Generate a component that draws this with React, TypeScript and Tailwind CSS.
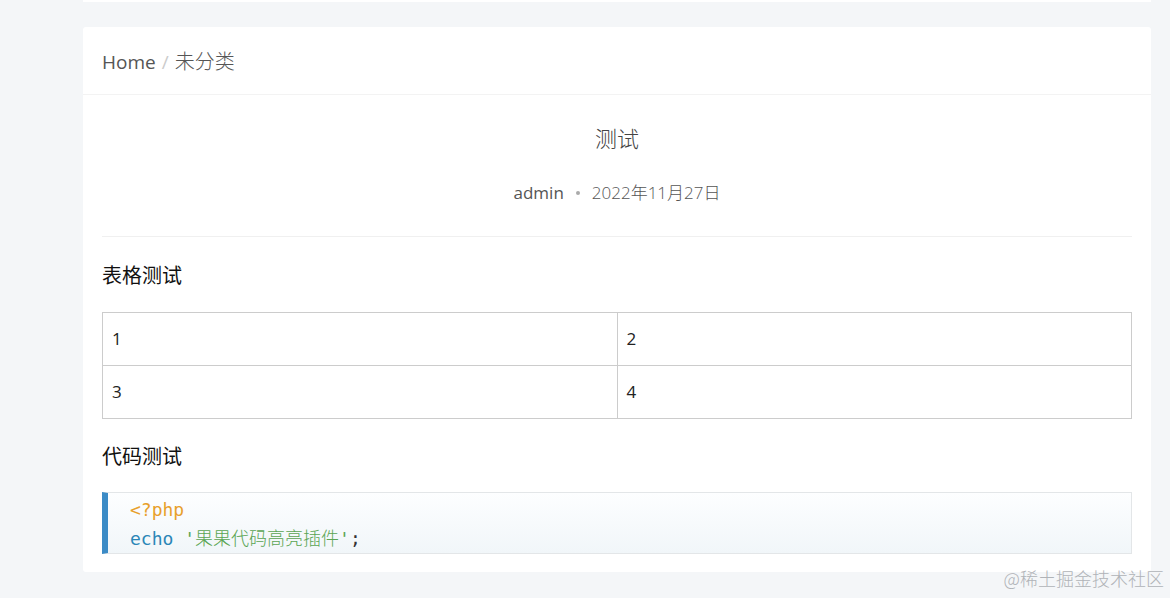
export default function App() {
  return (
    <div className="relative w-[1170px] h-[598px] overflow-hidden bg-[#f4f6f8] font-['Open_Sans','Noto_Sans_CJK_SC',sans-serif]">
      {/* previous card tail */}
      <div className="ml-[83px] w-[1068px] h-[2px] bg-white" />

      <div className="ml-[83px] mt-[25px] w-[1068px] bg-white rounded-[3px]">
        {/* Breadcrumb */}
        <div className="h-[68px] pt-[3px] px-[19px] flex items-center border-b border-[#f3f3f3] text-[19px] text-[#555]">
          <span>Home</span>
          <span className="mx-[6px] text-[#ccc]">/</span>
          <span className="text-[20px] font-light">未分类</span>
        </div>

        <div className="px-[19px] pb-[18px]">
          {/* Header */}
          <div className="flex flex-col items-center border-b border-[#f0f0f0] pb-[31px]">
            <h1 className="mt-[28px] text-[22px] leading-[30px] text-[#444] font-light">测试</h1>
            <div className="mt-[28px] flex items-center text-[17px] leading-[24px] text-[#555]">
              <span>admin</span>
              <span className="mx-[12px] w-[4px] h-[4px] rounded-full bg-[#aaa]" />
              <span className="font-light">2022年11月27日</span>
            </div>
          </div>

          {/* Table section */}
          <p className="mt-[25px] text-[20px] leading-[28px] text-[#111]">表格测试</p>
          <table className="mt-[22px] w-full border-collapse text-[17px] text-[#222]">
            <tbody>
              <tr>
                <td className="h-[53px] w-1/2 border border-[#ccc] px-[9px]">1</td>
                <td className="h-[53px] w-1/2 border border-[#ccc] px-[9px]">2</td>
              </tr>
              <tr>
                <td className="h-[53px] border border-[#ccc] px-[9px]">3</td>
                <td className="h-[53px] border border-[#ccc] px-[9px]">4</td>
              </tr>
            </tbody>
          </table>

          {/* Code section */}
          <p className="mt-[24px] text-[20px] leading-[28px] text-[#111]">代码测试</p>
          <div className="mt-[21px] border border-[#e3e6e8] border-l-[6px] border-l-[#3b8bc6] bg-gradient-to-b from-[#fdfeff] to-[#f1f6f9] pt-[2px] pl-[22px] font-['DejaVu_Sans_Mono','Noto_Sans_CJK_SC',monospace] text-[18px] leading-[29px]">
            <div className="text-[#e8a02c]">&lt;?php</div>
            <div>
              <span className="text-[#2b86b7]">echo</span>
              <span> </span>
              <span className="text-[#5aa553] font-light">'果果代码高亮插件'</span>
              <span className="text-[#333]">;</span>
            </div>
          </div>
        </div>
      </div>

      <div className="absolute right-[6px] bottom-[6px] text-[18px] text-[#b0b3b7] font-['Noto_Sans_CJK_SC',serif] font-light">
        @稀土掘金技术社区
      </div>
    </div>
  );
}
